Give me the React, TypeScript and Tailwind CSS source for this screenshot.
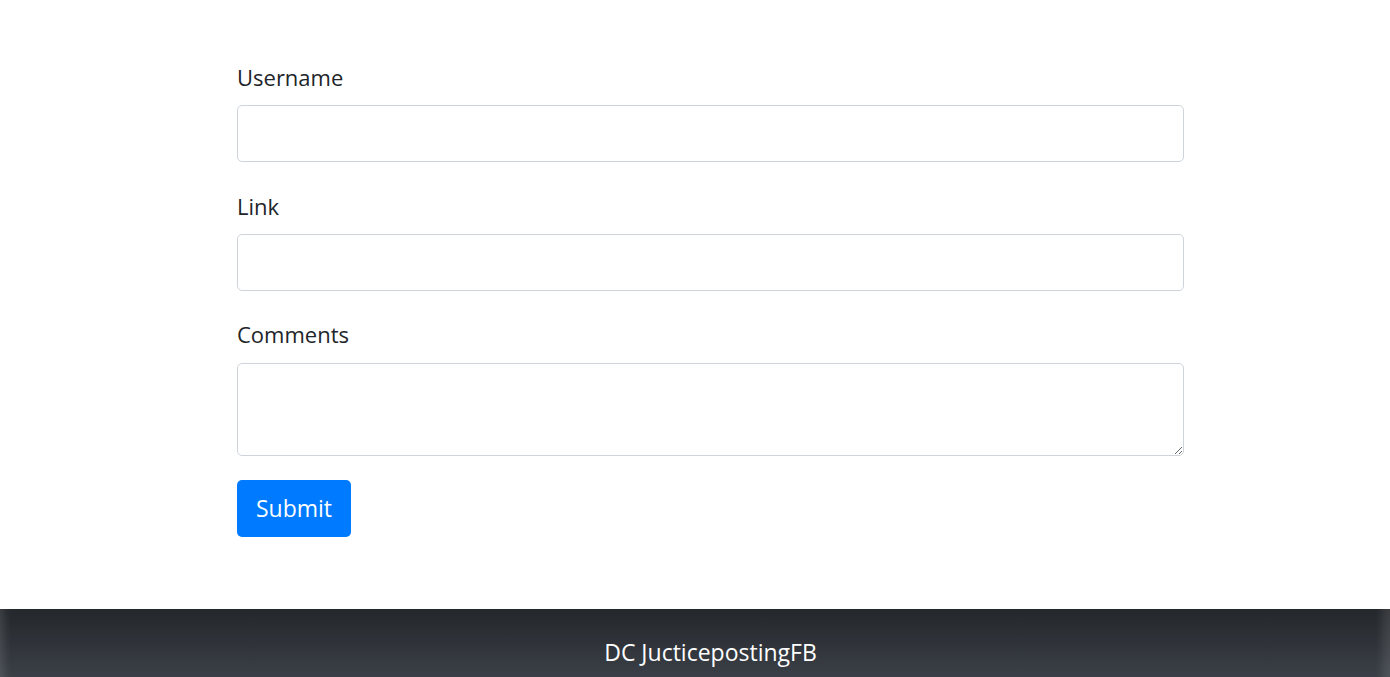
import { useState } from "react";

const font = { fontFamily: '"Segoe UI", "Open Sans", "Noto Sans", sans-serif' };

const Field = ({ label, children }) => (
  <div className="mb-[28px]">
    <label className="block text-[22px] leading-[33px] mb-[11px] text-[#212529]">{label}</label>
    {children}
  </div>
);

const App = () => {
  const [form, setForm] = useState({ username: "", link: "", comments: "" });

  return (
    <div className="min-h-[677px] flex flex-col bg-white" style={font}>
      <main className="flex-1 pt-[61px]">
        <form className="w-[947px] ml-[237px]" onSubmit={(e) => e.preventDefault()}>
          <Field label="Username">
            <input
              className="block w-full h-[57px] px-4 rounded-[5px] border border-[#ced4da] outline-none text-[21px]"
              value={form.username}
              onChange={(e) => setForm({ ...form, username: e.target.value })}
            />
          </Field>
          <Field label="Link">
            <input
              className="block w-full h-[57px] px-4 rounded-[5px] border border-[#ced4da] outline-none text-[21px]"
              value={form.link}
              onChange={(e) => setForm({ ...form, link: e.target.value })}
            />
          </Field>
          <div className="mb-[24px]">
            <label className="block text-[22px] leading-[31px] mb-[13px] text-[#212529]">Comments</label>
            <textarea
              className="block w-full h-[93px] px-4 py-2 rounded-[5px] border border-[#ced4da] outline-none text-[21px]"
              value={form.comments}
              onChange={(e) => setForm({ ...form, comments: e.target.value })}
            />
          </div>
          <button
            type="submit"
            className="w-[114px] h-[57px] rounded-[5px] bg-[#007bff] text-white text-[23px]"
          >
            Submit
          </button>
        </form>
      </main>

      {/* footer */}
      <footer className="h-[68px] mt-[72px] bg-gradient-to-b from-[#24272b] to-[#3b4048] shadow-[inset_10px_0_8px_-6px_rgba(255,255,255,0.12),inset_-18px_0_8px_-10px_rgba(255,255,255,0.1)] flex justify-center pt-[27px] pl-[31px]">
        <span className="text-white text-[23px] leading-[33px]">DC JucticepostingFB</span>
      </footer>
    </div>
  );
};

export default App;
